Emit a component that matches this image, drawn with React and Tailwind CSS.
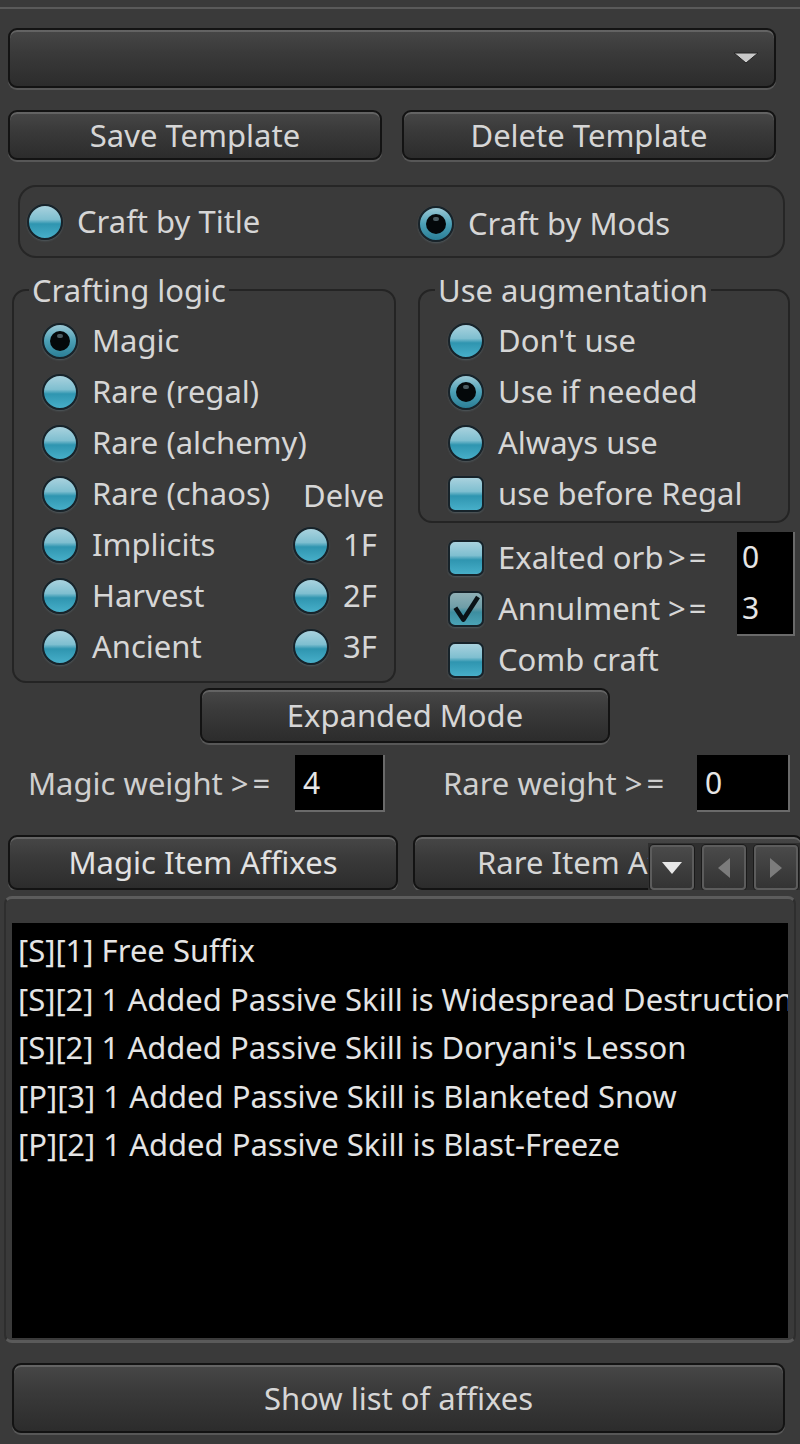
import clsx from "clsx"

const font = "font-['Noto_Sans','Liberation_Sans',sans-serif]"

const Radio = ({ checked }) => (
  <span
    className={clsx(
      "flex h-[36px] w-[36px] shrink-0 items-center justify-center rounded-full border-2 border-[#17232a] shadow-[0_1px_2px_rgba(120,150,160,0.35)]",
      checked
        ? "bg-[linear-gradient(180deg,#9cc9d6_0%,#4b9fb5_50%,#2b7f97_100%)]"
        : "bg-[linear-gradient(180deg,#a9d2de_0%,#7fbfd0_42%,#2f95b0_56%,#47afc9_100%)]"
    )}
  >
    {checked && (
      <span className="flex h-[20px] w-[20px] items-start justify-center rounded-full bg-[#04080a] pt-[3px]">
        <span className="h-[4px] w-[6px] rounded-full bg-[#4a5a60]" />
      </span>
    )}
  </span>
)

const Check = ({ checked }) => (
  <span
    className={clsx(
      "flex h-[36px] w-[36px] shrink-0 items-center justify-center rounded-[7px] border-2 border-[#17232a] shadow-[0_1px_2px_rgba(120,150,160,0.35)]",
      checked
        ? "bg-[linear-gradient(180deg,#8fb0b6_0%,#6f9ea8_45%,#3d8ea0_60%,#4aa3b6_100%)]"
        : "bg-[linear-gradient(180deg,#a9d2de_0%,#7fbfd0_42%,#2f95b0_56%,#47afc9_100%)]"
    )}
  >
    {checked && (
      <svg viewBox="0 0 24 24" className="h-[32px] w-[32px]">
        <path d="M4 11 L10 20 L21 3" stroke="#0a1216" strokeWidth="3.4" fill="none" strokeLinejoin="round" />
      </svg>
    )}
  </span>
)

const Btn = ({ children, className }) => (
  <div
    className={clsx(
      "flex items-center justify-center rounded-[9px] border-2 border-[#131313] bg-[linear-gradient(180deg,#474747_0%,#3a3a3a_40%,#2c2c2c_100%)] text-[31px] text-[#d6d6d6] shadow-[inset_0_2px_0_rgba(255,255,255,0.16),0_2px_0_#575757]",
      className
    )}
  >
    {children}
  </div>
)

const Field = ({ value, className }) => (
  <div
    className={clsx(
      "flex items-center bg-black pl-[5px] text-[30px] text-[#e6e6e6] border-r-2 border-b-2 border-[#6a6a6a]",
      className
    )}
  >
    {value}
  </div>
)

const Row = ({ children, className }) => (
  <div className={clsx("flex h-[51px] items-center gap-[14px] whitespace-nowrap", className)}>{children}</div>
)

const affixes = [
  "[S][1] Free Suffix",
  "[S][2] 1 Added Passive Skill is Widespread Destruction",
  "[S][2] 1 Added Passive Skill is Doryani's Lesson",
  "[P][3] 1 Added Passive Skill is Blanketed Snow",
  "[P][2] 1 Added Passive Skill is Blast-Freeze",
]

const ScrollBtn = ({ children }) => (
  <div className="flex h-[45px] w-[44px] items-center justify-center rounded-[4px] border-2 border-[#5c5c5c] bg-[linear-gradient(180deg,#4a4a4a_0%,#333333_100%)] shadow-[0_0_0_1px_#1a1a1a]">
    {children}
  </div>
)

export default function App() {
  return (
    <div className={clsx("flex h-[1444px] w-[800px] flex-col overflow-hidden bg-[#3a3a3a] text-[#d6d6d6]", font)}>
      <div className="mt-[7px] h-[2px] bg-[#5a5a5a]" />

      {/* template combo */}
      <Btn className="relative mx-[8px] mt-[19px] h-[60px] w-[768px] justify-end pr-[14px]">
        <svg viewBox="0 0 28 14" className="h-[14px] w-[28px]">
          <polygon points="2,2 26,2 14,12" fill="#c9c9c9" stroke="#222" strokeWidth="1" />
        </svg>
      </Btn>

      <div className="mt-[22px] flex gap-[20px] px-[8px]">
        <Btn className="h-[50px] w-[374px]">Save Template</Btn>
        <Btn className="h-[50px] w-[374px]">Delete Template</Btn>
      </div>

      {/* craft mode */}
      <div className="ml-[18px] mt-[25px] grid h-[73px] w-[767px] grid-cols-[398px_1fr] items-center rounded-[18px] border-2 border-[#262626] text-[31px]">
        <div className="flex items-center gap-[14px] pl-[7px]">
          <Radio />
          <span>Craft by Title</span>
        </div>
        <div className="flex items-center gap-[14px] pt-[4px]">
          <Radio checked />
          <span>Craft by Mods</span>
        </div>
      </div>

      {/* logic + augmentation */}
      <div className="mt-[14px] grid grid-cols-[384px_382px] gap-x-[22px] pl-[12px] text-[31px]">
        <fieldset className="h-[411px] rounded-[14px] border-2 border-[#242424] pb-[9px] pt-[7px]">
          <legend className="ml-[15px] px-[3px] leading-[36px]">Crafting logic</legend>
          <div className="grid grid-cols-[251px_1fr] pl-[28px]">
            <div>
              <Row><Radio checked /><span>Magic</span></Row>
              <Row><Radio /><span>Rare (regal)</span></Row>
              <Row><Radio /><span>Rare (alchemy)</span></Row>
              <Row><Radio /><span>Rare (chaos)</span></Row>
              <Row><Radio /><span>Implicits</span></Row>
              <Row><Radio /><span>Harvest</span></Row>
              <Row><Radio /><span>Ancient</span></Row>
            </div>
            <div className="pt-[153px]">
              <Row className="pl-[10px] pt-[4px]"><span>Delve</span></Row>
              <Row><Radio /><span>1F</span></Row>
              <Row><Radio /><span>2F</span></Row>
              <Row><Radio /><span>3F</span></Row>
            </div>
          </div>
        </fieldset>

        <div className="flex flex-col">
          <fieldset className="w-[372px] rounded-[14px] border-2 border-[#242424] pb-[2px] pt-[7px]">
            <legend className="ml-[15px] px-[3px] leading-[36px]">Use augmentation</legend>
            <div className="pl-[28px]">
              <Row><Radio /><span>Don't use</span></Row>
              <Row><Radio checked /><span>Use if needed</span></Row>
              <Row><Radio /><span>Always use</span></Row>
              <Row><Check /><span>use before Regal</span></Row>
            </div>
          </fieldset>

          <div className="mt-[9px] flex h-[51px] items-center">
            <Row className="w-[250px] pl-[30px]"><Check /><span>Exalted orb</span></Row>
            <span className="w-[69px] tracking-[3px]">&gt;=</span>
            <Field value="0" className="h-[52px] w-[58px]" />
          </div>
          <div className="flex h-[51px] items-center">
            <Row className="w-[250px] pl-[30px]"><Check checked /><span>Annulment</span></Row>
            <span className="w-[69px] tracking-[3px]">&gt;=</span>
            <Field value="3" className="h-[54px] w-[58px]" />
          </div>
          <Row className="pl-[30px]"><Check /><span>Comb craft</span></Row>
        </div>
      </div>

      <Btn className="ml-[200px] mt-[3px] h-[55px] w-[410px]">Expanded Mode</Btn>

      {/* weights */}
      <div className="mt-[12px] grid h-[57px] grid-cols-[267px_90px_58px_254px_93px] items-center pl-[28px] text-[31px] text-[#cfcfcf]">
        <span className="whitespace-nowrap">Magic weight <span className="tracking-[4px]">&gt;=</span></span>
        <Field value="4" className="h-[57px] pl-[8px]" />
        <span />
        <span className="whitespace-nowrap">Rare weight <span className="tracking-[4px]">&gt;=</span></span>
        <Field value="0" className="h-[57px] pl-[8px]" />
      </div>

      {/* tabs */}
      <div className="relative mt-[23px] flex h-[55px] gap-[15px] overflow-hidden pl-[8px]">
        <Btn className="h-[55px] w-[390px] shrink-0 text-[#e2e2e2]">Magic Item Affixes</Btn>
        <Btn className="h-[55px] w-[390px] shrink-0 pr-[14px]">Rare Item Affixes</Btn>
        <div className="absolute right-0 top-[8px] flex gap-[8px] bg-[#2f2f2f] py-[2px] pl-[2px] pr-[2px]">
          <ScrollBtn>
            <svg viewBox="0 0 20 12" className="h-[12px] w-[20px]">
              <polygon points="0,0 20,0 10,12" fill="#e8e8e8" />
            </svg>
          </ScrollBtn>
          <ScrollBtn>
            <svg viewBox="0 0 12 20" className="h-[20px] w-[12px]">
              <polygon points="12,0 12,20 0,10" fill="#7c7c7c" />
            </svg>
          </ScrollBtn>
          <ScrollBtn>
            <svg viewBox="0 0 12 20" className="h-[20px] w-[12px]">
              <polygon points="0,0 0,20 12,10" fill="#7c7c7c" />
            </svg>
          </ScrollBtn>
        </div>
      </div>

      {/* affix pane */}
      <div className="mx-[4px] mt-[6px] rounded-[8px] border-x-2 border-b-[3px] border-t-[3px] border-x-[#2e2e2e] border-b-[#5a5a5a] border-t-[#5c5c5c] px-[6px] pb-[2px] pt-[24px]">
        <div className="h-[415px] overflow-hidden bg-black pl-[6px] pt-[3px] text-[31px] leading-[48.5px] text-[#e4e4e4]">
          {affixes.map((a) => (
            <div key={a} className="whitespace-nowrap">{a}</div>
          ))}
        </div>
      </div>

      <Btn className="mx-[12px] mt-[20px] h-[70px] w-[773px] text-[#d0d0d0]">Show list of affixes</Btn>
    </div>
  )
}
